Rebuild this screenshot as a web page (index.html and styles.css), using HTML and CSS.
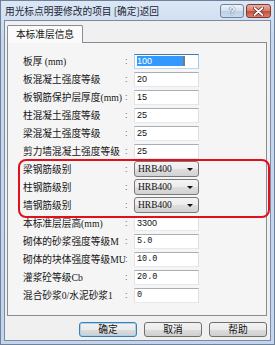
FILE: index.html
```html
<!DOCTYPE html>
<html lang="zh-CN">
<head>
    <meta charset="UTF-8">
    <title>本标准层信息</title>
    <link rel="stylesheet" href="styles.css">
</head>
<body>
<div class="window">
    <div class="titlebar">
        <span class="title">用光标点明要修改的项目 [确定]返回</span>
        <div class="caption-btns">
            <span class="cap-btn help">?</span>
            <span class="cap-btn close">
                <svg width="11" height="9" viewBox="0 0 11 9">
                    <path d="M1.5 1 L9.5 8 M9.5 1 L1.5 8" stroke="#5a1c16" stroke-width="3.2" stroke-linecap="round"/>
                    <path d="M1.5 1 L9.5 8 M9.5 1 L1.5 8" stroke="#fff" stroke-width="1.8" stroke-linecap="round"/>
                </svg>
            </span>
        </div>
    </div>

    <div class="client">
        <div class="tabs">
            <div class="tab active">本标准层信息</div>
        </div>

        <div class="panel">
            <div class="row"><span class="label">板厚 (mm)</span><span class="colon">:</span><div class="field focus"><span class="sel">100</span></div></div>
            <div class="row"><span class="label">板混凝土强度等级</span><span class="colon">:</span><div class="field">20</div></div>
            <div class="row"><span class="label">板钢筋保护层厚度(mm)</span><span class="colon">:</span><div class="field">15</div></div>
            <div class="row"><span class="label">柱混凝土强度等级</span><span class="colon">:</span><div class="field">25</div></div>
            <div class="row"><span class="label">梁混凝土强度等级</span><span class="colon">:</span><div class="field">25</div></div>
            <div class="row"><span class="label">剪力墙混凝土强度等级</span><span class="colon">:</span><div class="field">25</div></div>

            <div class="mark">
                <div class="row"><span class="label">梁钢筋级别</span><span class="colon">:</span><div class="combo">HRB400</div></div>
                <div class="row"><span class="label">柱钢筋级别</span><span class="colon">:</span><div class="combo">HRB400</div></div>
                <div class="row"><span class="label">墙钢筋级别</span><span class="colon">:</span><div class="combo">HRB400</div></div>
            </div>

            <div class="row"><span class="label">本标准层层高(mm)</span><span class="colon">:</span><div class="field">3300</div></div>
            <div class="row"><span class="label">砌体的砂浆强度等级M</span><span class="colon">:</span><div class="field mono">5.0</div></div>
            <div class="row"><span class="label">砌体的块体强度等级MU</span><span class="colon">:</span><div class="field mono">10.0</div></div>
            <div class="row"><span class="label">灌浆砼等级Cb</span><span class="colon">:</span><div class="field mono">20.0</div></div>
            <div class="row"><span class="label">混合砂浆0/水泥砂浆1</span><span class="colon">:</span><div class="field mono">0</div></div>
        </div>

        <div class="buttons">
            <button class="btn default">确定</button>
            <button class="btn">取消</button>
            <button class="btn">帮助</button>
        </div>
    </div>
</div>
</body>
</html>
```

FILE: styles.css
```css
* {
    box-sizing: border-box;
}
body {
    margin: 0;
    font-family: "Noto Sans CJK SC", sans-serif;
}
.window {
    width: 275px;
    height: 345px;
    display: flex;
    flex-direction: column;
    border: 1px solid #6f8299;
    padding: 0 3px 3px;
    background: linear-gradient(#dbe7f5, #c6d8ee 40px, #c2d5ec);
}
.titlebar {
    height: 19px;
    display: flex;
    align-items: center;
    justify-content: space-between;
}
.title {
    font-size: 9.7px;
    color: #1c2633;
    padding-left: 1px;
    white-space: nowrap;
}
.caption-btns {
    display: flex;
    gap: 2px;
    align-self: flex-start;
    margin-top: 3px;
}
.cap-btn {
    width: 24px;
    height: 14px;
    border: 1px solid #70839b;
    border-radius: 3px;
    display: flex;
    align-items: center;
    justify-content: center;
}
.help {
    background: linear-gradient(#eef3fa, #d3e0ef 50%, #bdd0e7 51%, #cadbee);
    font-family: "Liberation Sans", sans-serif;
    font-size: 11px;
    font-weight: bold;
    color: #fff;
    text-shadow: 0 0 1px #41566f, 0 0 1px #41566f;
}
.close {
    width: 25px;
    border-color: #7e3a31;
    background: linear-gradient(#eab0a4, #d77a6a 50%, #c64a38 51%, #d8806f);
}
.client {
    flex: 1;
    display: flex;
    flex-direction: column;
    border: 1px solid #7b8ca2;
    background: #f0f0f0;
    padding: 4px 3px 3px 2px;
}
.tabs {
    display: flex;
}
.tab {
    position: relative;
    z-index: 1;
    width: 76px;
    height: 18px;
    margin-bottom: -1px;
    border: 1px solid #898c95;
    border-bottom: none;
    border-radius: 2px 2px 0 0;
    background: #fbfbfb;
    font-size: 9.7px;
    line-height: 16px;
    text-align: center;
    color: #111;
}
.panel {
    flex: 1;
    border: 1px solid #898c95;
    background: #f5f5f5;
    padding: 9px 0 0 15px;
}
.row {
    display: flex;
    align-items: center;
    height: 18px;
}
.label {
    width: 100px;
    font-family: "Liberation Serif", "Noto Sans CJK SC", serif;
    font-size: 9.7px;
    color: #151515;
    white-space: nowrap;
}
.colon {
    width: 11px;
    padding-left: 2px;
    font-family: "Liberation Sans", sans-serif;
    font-size: 9px;
    color: #666;
}
.field {
    width: 65px;
    height: 15px;
    border: 1px solid;
    border-color: #abadb3 #dbdfe6 #e3e9ef #e2e3ea;
    background: #fff;
    padding-left: 2px;
    font-family: "Liberation Sans", sans-serif;
    font-size: 9px;
    line-height: 13px;
    color: #111;
}
.field.mono {
    font-family: "Liberation Mono", monospace;
    font-size: 8.5px;
}
.field.focus {
    border-color: #3d7bad #a4c9e3 #b7d9ed #b5cfe7;
    padding-top: 1px;
}
.sel {
    display: block;
    width: 48px;
    height: 10px;
    line-height: 10px;
    background: #3399ff;
    border-right: 2px solid #7a7a7a;
    color: #fff;
}
.mark {
    position: relative;
}
.mark::after {
    content: "";
    position: absolute;
    left: -5px;
    right: -4px;
    top: -1px;
    bottom: -4px;
    border: 2px solid #e3101c;
    border-radius: 8px;
}
.combo {
    position: relative;
    width: 65px;
    height: 16px;
    border: 1px solid #7a7a7a;
    border-radius: 3px;
    background: linear-gradient(#f4f4f4, #ececec 50%, #dedede 51%, #d2d2d2);
    padding-left: 3px;
    font-family: "Liberation Serif", serif;
    font-size: 9.5px;
    line-height: 14px;
    color: #111;
}
.combo::after {
    content: "";
    position: absolute;
    right: 5px;
    top: 6px;
    border-left: 3.5px solid transparent;
    border-right: 3.5px solid transparent;
    border-top: 3.5px solid #111;
}
.buttons {
    display: flex;
    justify-content: flex-end;
    gap: 7px;
    margin-top: 6px;
}
.btn {
    width: 58px;
    height: 15px;
    padding: 0;
    border: 1px solid #707070;
    border-radius: 3px;
    background: linear-gradient(#f2f2f2, #ebebeb 50%, #dddddd 51%, #cfcfcf);
    font-family: "Noto Sans CJK SC", sans-serif;
    font-size: 9.7px;
    line-height: 13px;
    color: #111;
}
.btn.default {
    border-color: #3c7fb1;
    box-shadow: inset 0 0 0 1px #a7d3f3;
}
```
